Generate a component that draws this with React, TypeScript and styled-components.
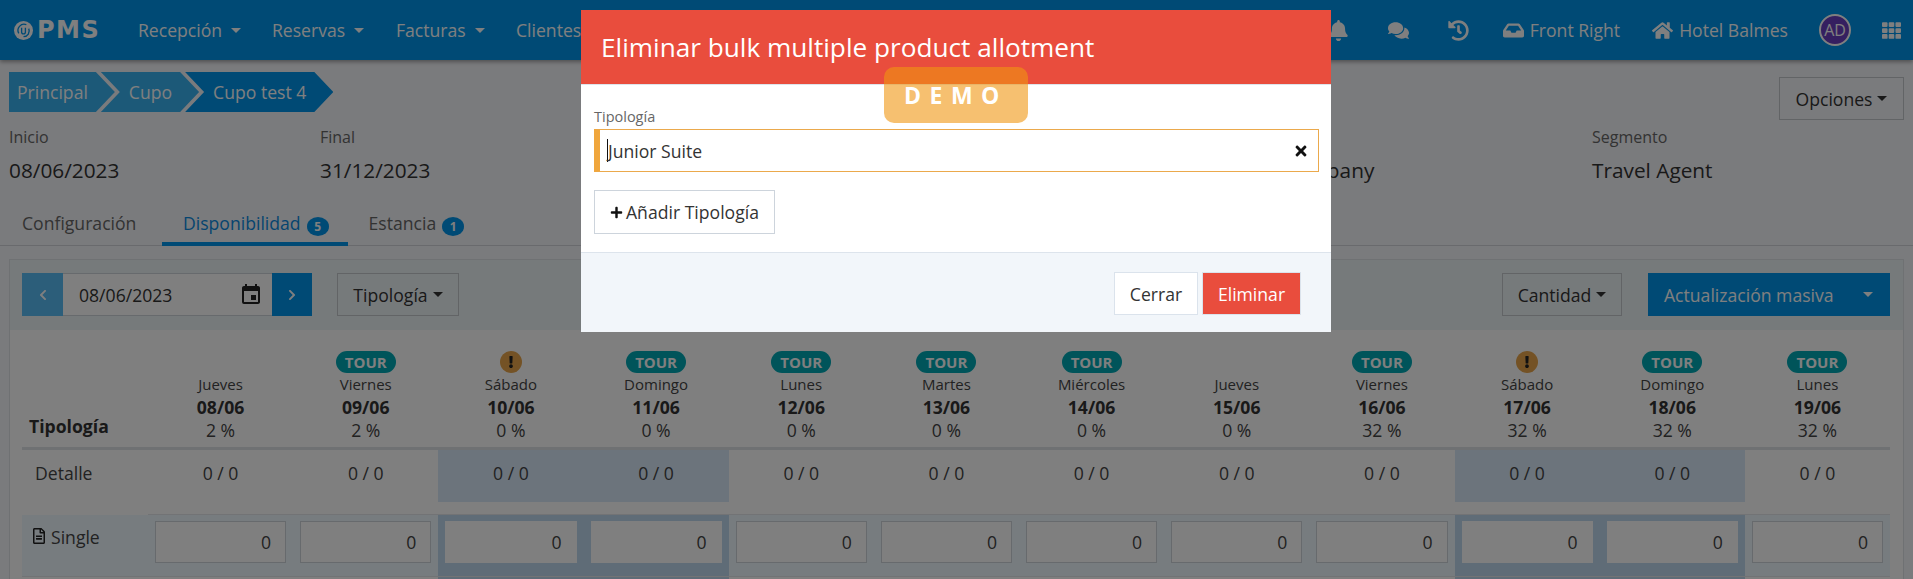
import React from 'react';
import styled, { createGlobalStyle } from 'styled-components';
import {
  FaBell, FaComments, FaHistory, FaInbox, FaHome, FaTh, FaRegFileAlt, FaPlus, FaTimes,
  FaChevronLeft, FaChevronRight, FaExclamation,
} from 'react-icons/fa';
import { MdEvent } from 'react-icons/md';

const Global = createGlobalStyle`
  html, body { margin: 0; padding: 0; height: 579px; overflow: hidden; background: #f5f6fa; }
  body { font-family: "Open Sans", "Liberation Sans", sans-serif; font-size: 17.6px; color: #333; }
  * { box-sizing: border-box; }
`;

const Page = styled.div`
  width: 1913px;
  height: 579px;
  overflow: hidden;
  position: relative;
`;

/* ---------- navbar ---------- */
const Navbar = styled.header`
  height: 60px;
  background: #0095eb;
  color: #fff;
  display: flex;
  align-items: center;
  box-shadow: 0 2px 4px rgba(0, 0, 0, 0.35);
  position: relative;
`;
const Logo = styled.div`
  display: flex;
  align-items: center;
  gap: 4px;
  margin-left: 14px;
  width: 124px;
`;
const LogoWord = styled.span`
  font-family: "DejaVu Sans", sans-serif;
  font-size: 24px;
  font-weight: 700;
  line-height: 24px;
  letter-spacing: 1.5px;
  color: #fff;
`;
const NavMenu = styled.nav`
  display: flex;
  align-items: center;
`;
const NavItem = styled.div<{ $w: number }>`
  width: ${(p) => p.$w}px;
  display: flex;
  align-items: center;
  gap: 9px;
  white-space: nowrap;
`;
const Caret = styled.span`
  display: inline-block;
  border-top: 5px solid currentColor;
  border-left: 5px solid transparent;
  border-right: 5px solid transparent;
`;
const NavRight = styled.div`
  margin-left: auto;
  display: flex;
  align-items: center;
  padding-right: 12px;
`;
const NavIcon = styled.span<{ $w: number }>`
  width: ${(p) => p.$w}px;
  display: flex;
  justify-content: center;
  font-size: 21px;
`;
const NavLabel = styled.span<{ $ml: number }>`
  display: flex;
  align-items: center;
  gap: 6px;
  margin-left: ${(p) => p.$ml}px;
  white-space: nowrap;
  svg { font-size: 21px; }
`;
const Avatar = styled.span`
  width: 32px;
  height: 32px;
  margin-left: 31px;
  margin-right: 31px;
  border-radius: 50%;
  border: 2px solid #fff;
  background: #6a3fc0;
  font-size: 16px;
  display: flex;
  align-items: center;
  justify-content: center;
`;

/* ---------- header area ---------- */
const TopRow = styled.div`
  display: flex;
  justify-content: space-between;
  align-items: flex-start;
  padding: 12px 9px 0;
  height: 67px;
`;
const Crumbs = styled.div`
  display: flex;
`;
const Crumb = styled.div<{ $first?: boolean; $active?: boolean }>`
  height: 40px;
  line-height: 40px;
  color: #fff;
  background: ${(p) => (p.$active ? '#0095eb' : '#38b2f0')};
  padding: ${(p) => (p.$first ? '0 27px 0 8px' : '0 27px 0 28px')};
  margin-left: ${(p) => (p.$first ? '0' : '-14px')};
  clip-path: ${(p) =>
    p.$first
      ? 'polygon(0 0, calc(100% - 19px) 0, 100% 50%, calc(100% - 19px) 100%, 0 100%)'
      : 'polygon(0 0, calc(100% - 19px) 0, 100% 50%, calc(100% - 19px) 100%, 0 100%, 19px 50%)'};
`;
const OutlineButton = styled.div`
  height: 43px;
  display: inline-flex;
  align-items: center;
  justify-content: center;
  gap: 5px;
  padding: 0 12px;
  color: #333;
  border: 1px solid #c4c8cc;
  background: transparent;
  white-space: nowrap;
`;
const OptionsButton = styled(OutlineButton)`
  margin-top: 5px;
  width: 125px;
`;
const Fields = styled.div`
  display: grid;
  grid-template-columns: 311px 962px 310px 1fr;
  padding: 0 9px;
  height: 72px;
`;
const Field = styled.div`
  display: flex;
  flex-direction: column;
`;
const FieldLabel = styled.div`
  font-size: 16px;
  line-height: 20px;
  color: #666;
`;
const FieldValue = styled.div`
  font-size: 20.8px;
  line-height: 28px;
  margin-top: 9px;
  color: #333;
`;
const Tabs = styled.div`
  display: flex;
  align-items: flex-end;
  height: 47px;
  border-bottom: 1px solid #d2d5da;
  padding-left: 1px;
`;
const Tab = styled.div<{ $active?: boolean; $w?: number }>`
  height: 46px;
  ${(p) => (p.$w ? `width: ${p.$w}px;` : '')}
  display: flex;
  align-items: center;
  gap: 6px;
  padding: 4px 19px 0 21px;
  color: ${(p) => (p.$active ? '#0b8ae0' : '#666')};
  border-bottom: 4px solid ${(p) => (p.$active ? '#0095eb' : 'transparent')};
  margin-bottom: -1px;
  white-space: nowrap;
`;
const Count = styled.span`
  width: 22px;
  height: 19px;
  margin-top: 6px;
  border-radius: 50%;
  background: #0095eb;
  color: #fff;
  font-size: 12px;
  font-weight: 700;
  display: flex;
  align-items: center;
  justify-content: center;
`;

/* ---------- panel ---------- */
const Panel = styled.section`
  margin: 13px 9px 0;
  border: 1px solid #dfe3e6;
  background: #fff;
`;
const Toolbar = styled.div`
  height: 70px;
  background: #edf4f6;
  display: flex;
  align-items: flex-start;
  padding: 13px 13px 0 12px;
`;
const DateGroup = styled.div`
  display: flex;
  height: 43px;
  margin-right: 25px;
`;
const Arrow = styled.div<{ $dim?: boolean }>`
  width: ${(p) => (p.$dim ? 41 : 40)}px;
  background: ${(p) => (p.$dim ? '#58bcf5' : '#0095eb')};
  color: #fff;
  font-size: 12px;
  display: flex;
  align-items: center;
  justify-content: center;
`;
const DateInput = styled.div`
  width: 209px;
  background: #fff;
  border: 1px solid #ced4da;
  border-width: 1px 0;
  display: flex;
  align-items: center;
  justify-content: space-between;
  padding: 0 9px 0 16px;
  svg { font-size: 24px; color: #222; }
`;
const TypeButton = styled(OutlineButton)`
  width: 122px;
`;
const ToolbarRight = styled.div`
  margin-left: auto;
  display: flex;
  gap: 26px;
`;
const QtyButton = styled(OutlineButton)`
  width: 120px;
`;
const BulkButton = styled.div`
  width: 242px;
  height: 43px;
  background: #0095eb;
  color: #fff;
  display: flex;
  align-items: center;
  justify-content: space-between;
  padding: 0 17px 0 16px;
`;

/* ---------- table ---------- */
const TableWrap = styled.div`
  padding: 0 13px 0 12px;
  background: #fff;
`;
const Grid = styled.div`
  display: grid;
  grid-template-columns: 126px repeat(12, 1fr);
`;
const Head = styled.div`
  height: 120px;
  border-bottom: 3px solid #dfe3e6;
  display: flex;
  flex-direction: column;
  align-items: center;
  justify-content: flex-end;
  padding-bottom: 5px;
`;
const HeadTitle = styled(Head)`
  align-items: flex-start;
  font-weight: 700;
  padding: 0 0 9px 7px;
`;
const Tag = styled.span`
  height: 22px;
  width: 60px;
  margin-bottom: 1px;
  border-radius: 11px;
  background: #00a8b5;
  color: #fff;
  font-size: 15px;
  font-weight: 700;
  line-height: 22px;
  text-align: center;
`;
const Warn = styled.span`
  height: 22px;
  width: 22px;
  margin-bottom: 1px;
  border-radius: 50%;
  background: #e8a54a;
  color: #222;
  font-size: 12px;
  display: flex;
  align-items: center;
  justify-content: center;
`;
const DayName = styled.div`
  font-size: 15px;
  line-height: 21px;
  color: #444;
`;
const DayDate = styled.div`
  font-weight: 700;
  line-height: 22px;
  margin-top: 1px;
`;
const DayPct = styled.div`
  line-height: 24px;
  color: #444;
`;
const DetailLabel = styled.div`
  height: 65px;
  padding: 11px 0 0 13px;
  line-height: 24px;
  color: #444;
`;
const DetailCell = styled.div`
  height: 65px;
  border-bottom: 1px solid #e4e7ea;
`;
const DetailFill = styled.div<{ $weekend?: boolean }>`
  height: 52px;
  padding-top: 11px;
  line-height: 24px;
  text-align: center;
  color: #444;
  background: ${(p) => (p.$weekend ? '#d8e8f8' : 'transparent')};
`;
const RowLabel = styled.div`
  height: 62px;
  background: #eef9ff;
  border-bottom: 1px solid #e4e7ea;
  display: flex;
  align-items: flex-start;
  gap: 4px;
  padding: 10px 0 0 9px;
  line-height: 24px;
  color: #444;
  svg { font-size: 16px; margin-top: 3px; color: #222; }
`;
const InputCell = styled.div<{ $weekend?: boolean }>`
  height: 62px;
  padding: 6px 7px 0;
  background: ${(p) => (p.$weekend ? '#bed8ee' : '#eef9ff')};
  border-bottom: 1px solid #e4e7ea;
`;
const Qty = styled.div<{ $weekend?: boolean }>`
  height: 42px;
  line-height: 40px;
  background: #fff;
  border: 1px solid ${(p) => (p.$weekend ? '#fff' : '#ced4da')};
  text-align: right;
  padding-right: 14px;
  color: #444;
`;
const TailLabel = styled.div`
  height: 8px;
`;
const TailCell = styled.div<{ $weekend?: boolean }>`
  height: 8px;
  background: ${(p) => (p.$weekend ? '#bed8ee' : 'transparent')};
`;

/* ---------- modal ---------- */
const Backdrop = styled.div`
  position: absolute;
  inset: 0;
  background: rgba(0, 0, 0, 0.5);
`;
const Modal = styled.div`
  position: absolute;
  top: 10px;
  left: 581px;
  width: 750px;
  background: #fff;
  display: flex;
  flex-direction: column;
`;
const ModalHead = styled.div`
  height: 74px;
  background: #e94d3d;
  color: #fff;
  display: flex;
  align-items: center;
  padding-left: 20px;
  font-size: 26.2px;
`;
const ModalBody = styled.div`
  height: 169px;
  padding: 22px 12px 0 13px;
  border-top: 1px solid #dde4ec;
  border-bottom: 1px solid #dde4ec;
`;
const SmallLabel = styled.div`
  font-size: 14.5px;
  line-height: 20px;
  color: #666;
`;
const Select = styled.div`
  height: 43px;
  margin-top: 2px;
  border: 1px solid #eba94c;
  border-left: 6px solid #f0a63c;
  display: flex;
  align-items: center;
  justify-content: space-between;
  padding: 0 9px 0 7px;
  color: #333;
  svg { font-size: 16px; color: #111; }
`;
const SelectValue = styled.span`
  display: flex;
  align-items: center;
`;
const Cursor = styled.span`
  display: inline-block;
  width: 1px;
  height: 23px;
  background: #111;
`;
const AddButton = styled.div`
  margin-top: 18px;
  width: 181px;
  height: 44px;
  border: 1px solid #cdd4dc;
  display: flex;
  align-items: center;
  gap: 3px;
  padding-left: 15px;
  color: #333;
  svg { font-size: 13px; color: #111; }
`;
const ModalFoot = styled.div`
  height: 79px;
  background: #f2f6fa;
  display: flex;
  justify-content: flex-end;
  align-items: flex-start;
  gap: 4px;
  padding: 19px 30px 0 0;
`;
const FootButton = styled.div<{ $danger?: boolean }>`
  width: ${(p) => (p.$danger ? 99 : 84)}px;
  height: 43px;
  display: flex;
  align-items: center;
  justify-content: center;
  background: ${(p) => (p.$danger ? '#e94d3d' : '#fff')};
  color: ${(p) => (p.$danger ? '#fff' : '#333')};
  border: 1px solid #dbe3ec;
`;
const DemoBadge = styled.div`
  position: absolute;
  top: 67px;
  left: 884px;
  width: 144px;
  height: 56px;
  border-radius: 10px;
  background: rgba(240, 150, 17, 0.6);
  color: #fff;
  font-size: 23px;
  font-weight: 700;
  letter-spacing: 8.5px;
  line-height: 56px;
  padding-left: 20px;
`;

const LogoMark = () => (
  <svg width="19" height="19" viewBox="0 0 20 20" aria-hidden="true">
    <circle cx="10" cy="10" r="10" fill="#fff" />
    <path d="M5 13 A6.5 6.5 0 0 1 13 3.8" fill="none" stroke="#0095eb" strokeWidth="1.4" />
    <path d="M8 7v4.5a2 2 0 0 0 4 0V7" fill="none" stroke="#0095eb" strokeWidth="1.4" />
    <path d="M15.5 8 A6 6 0 0 1 10 16.5" fill="none" stroke="#0095eb" strokeWidth="1.4" />
  </svg>
);

type Day = { name: string; date: string; pct: string; mark?: 'tour' | 'warn'; weekend?: boolean };
const days: Day[] = [
  { name: 'Jueves', date: '08/06', pct: '2 %' },
  { name: 'Viernes', date: '09/06', pct: '2 %', mark: 'tour' },
  { name: 'Sábado', date: '10/06', pct: '0 %', mark: 'warn', weekend: true },
  { name: 'Domingo', date: '11/06', pct: '0 %', mark: 'tour', weekend: true },
  { name: 'Lunes', date: '12/06', pct: '0 %', mark: 'tour' },
  { name: 'Martes', date: '13/06', pct: '0 %', mark: 'tour' },
  { name: 'Miércoles', date: '14/06', pct: '0 %', mark: 'tour' },
  { name: 'Jueves', date: '15/06', pct: '0 %' },
  { name: 'Viernes', date: '16/06', pct: '32 %', mark: 'tour' },
  { name: 'Sábado', date: '17/06', pct: '32 %', mark: 'warn', weekend: true },
  { name: 'Domingo', date: '18/06', pct: '32 %', mark: 'tour', weekend: true },
  { name: 'Lunes', date: '19/06', pct: '32 %', mark: 'tour' },
];

export default function App() {
  return (
    <Page>
      <Global />
      <Navbar>
        <Logo>
          <LogoMark />
          <LogoWord>PMS</LogoWord>
        </Logo>
        <NavMenu>
          <NavItem $w={134}>Recepción <Caret /></NavItem>
          <NavItem $w={124}>Reservas <Caret /></NavItem>
          <NavItem $w={120}>Facturas <Caret /></NavItem>
          <NavItem $w={80}>Clientes</NavItem>
        </NavMenu>
        <NavRight>
          <NavIcon $w={60}><FaBell /></NavIcon>
          <NavIcon $w={60}><FaComments /></NavIcon>
          <NavIcon $w={60}><FaHistory /></NavIcon>
          <NavLabel $ml={14}><FaInbox />Front Right</NavLabel>
          <NavLabel $ml={32}><FaHome />Hotel Balmes</NavLabel>
          <Avatar>AD</Avatar>
          <NavIcon $w={19}><FaTh /></NavIcon>
        </NavRight>
      </Navbar>

      <TopRow>
        <Crumbs>
          <Crumb $first>Principal</Crumb>
          <Crumb>Cupo</Crumb>
          <Crumb $active>Cupo test 4</Crumb>
        </Crumbs>
        <OptionsButton>Opciones <Caret /></OptionsButton>
      </TopRow>

      <Fields>
        <Field><FieldLabel>Inicio</FieldLabel><FieldValue>08/06/2023</FieldValue></Field>
        <Field><FieldLabel>Final</FieldLabel><FieldValue>31/12/2023</FieldValue></Field>
        <Field><FieldLabel>&nbsp;</FieldLabel><FieldValue>Company</FieldValue></Field>
        <Field><FieldLabel>Segmento</FieldLabel><FieldValue>Travel Agent</FieldValue></Field>
      </Fields>

      <Tabs>
        <Tab $w={161}>Configuración</Tab>
        <Tab $active>Disponibilidad <Count>5</Count></Tab>
        <Tab>Estancia <Count>1</Count></Tab>
      </Tabs>

      <Panel>
        <Toolbar>
          <DateGroup>
            <Arrow $dim><FaChevronLeft /></Arrow>
            <DateInput>08/06/2023 <MdEvent /></DateInput>
            <Arrow><FaChevronRight /></Arrow>
          </DateGroup>
          <TypeButton>Tipología <Caret /></TypeButton>
          <ToolbarRight>
            <QtyButton>Cantidad <Caret /></QtyButton>
            <BulkButton>Actualización masiva <Caret /></BulkButton>
          </ToolbarRight>
        </Toolbar>
        <TableWrap>
          <Grid>
            <HeadTitle>Tipología</HeadTitle>
            {days.map((d) => (
              <Head key={d.date}>
                {d.mark === 'tour' && <Tag>TOUR</Tag>}
                {d.mark === 'warn' && <Warn><FaExclamation /></Warn>}
                <DayName>{d.name}</DayName>
                <DayDate>{d.date}</DayDate>
                <DayPct>{d.pct}</DayPct>
              </Head>
            ))}
            <DetailLabel>Detalle</DetailLabel>
            {days.map((d) => (
              <DetailCell key={d.date}>
                <DetailFill $weekend={d.weekend}>0 / 0</DetailFill>
              </DetailCell>
            ))}
            <RowLabel><FaRegFileAlt />Single</RowLabel>
            {days.map((d) => (
              <InputCell key={d.date} $weekend={d.weekend}>
                <Qty $weekend={d.weekend}>0</Qty>
              </InputCell>
            ))}
            <TailLabel />
            {days.map((d) => (
              <TailCell key={d.date} $weekend={d.weekend} />
            ))}
          </Grid>
        </TableWrap>
      </Panel>

      <Backdrop />
      <Modal>
        <ModalHead>Eliminar bulk multiple product allotment</ModalHead>
        <ModalBody>
          <SmallLabel>Tipología</SmallLabel>
          <Select>
            <SelectValue><Cursor />Junior Suite</SelectValue>
            <FaTimes />
          </Select>
          <AddButton><FaPlus />Añadir Tipología</AddButton>
        </ModalBody>
        <ModalFoot>
          <FootButton>Cerrar</FootButton>
          <FootButton $danger>Eliminar</FootButton>
        </ModalFoot>
      </Modal>
      <DemoBadge>DEMO</DemoBadge>
    </Page>
  );
}
